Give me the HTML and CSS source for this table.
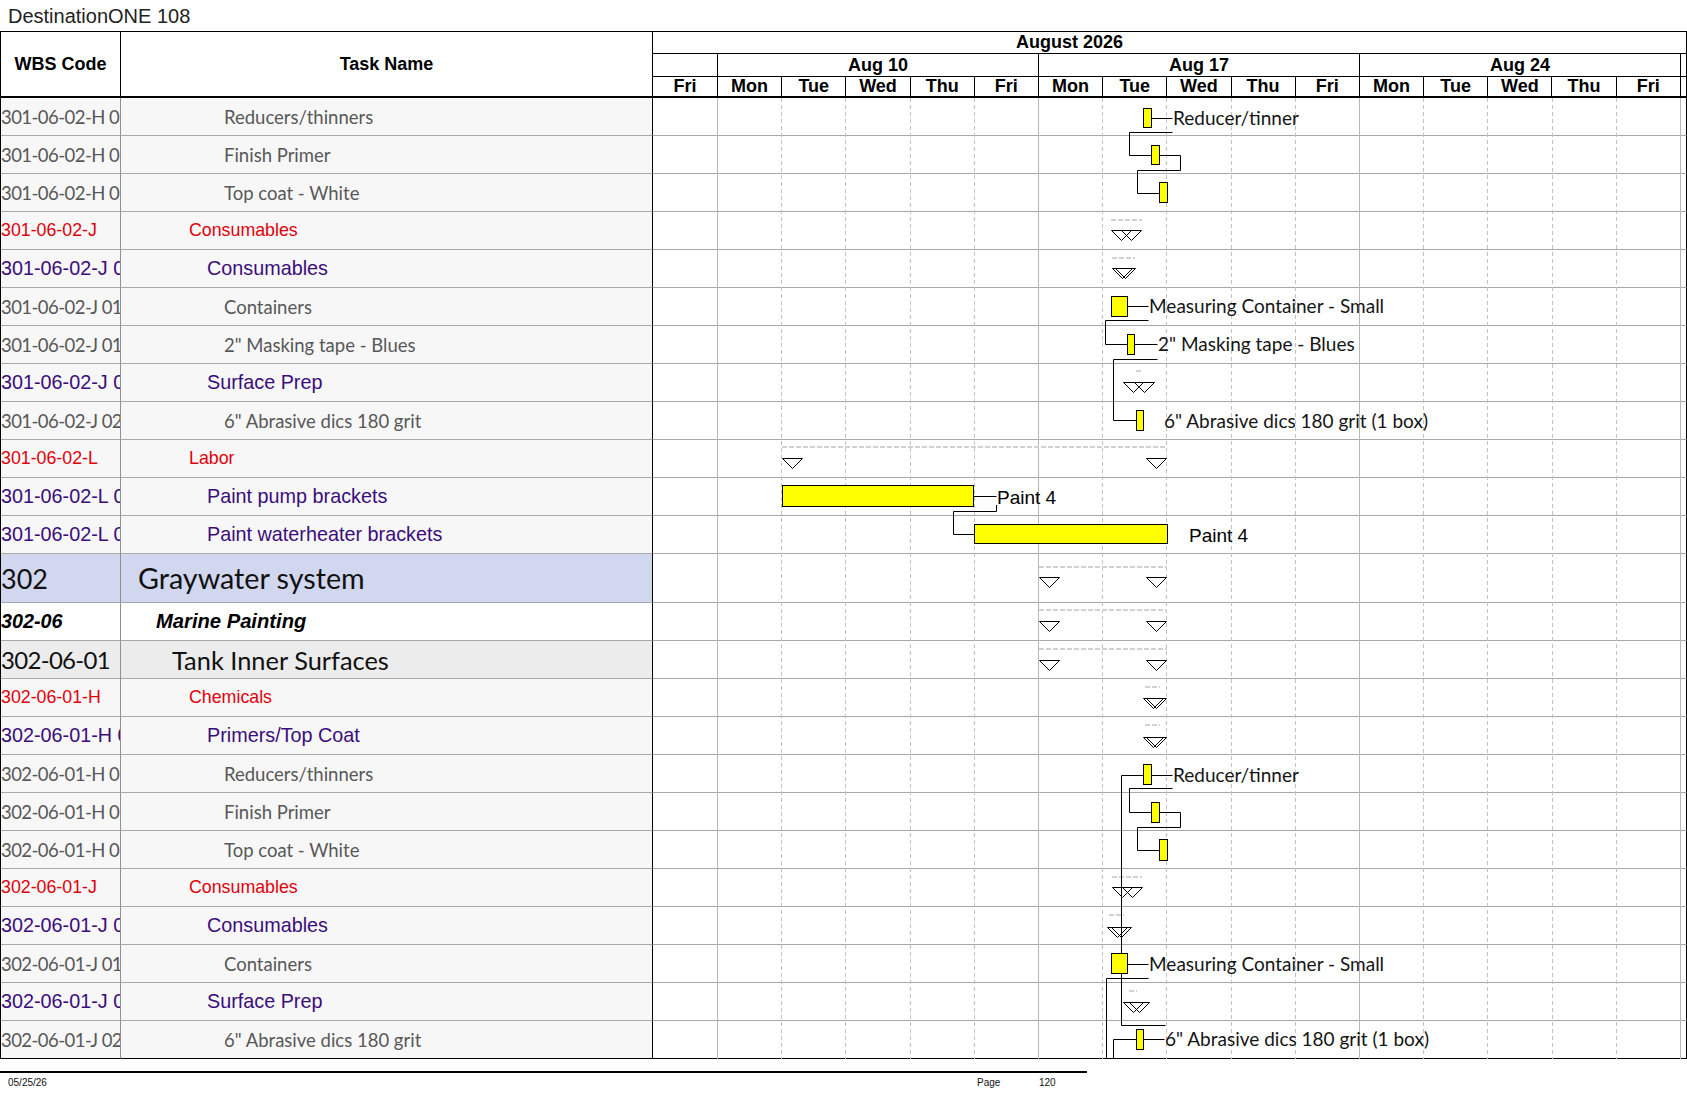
FILE: index.html
```html
<!DOCTYPE html>
<html lang="en">
<head>
<meta charset="utf-8">
<title>DestinationONE 108</title>
<link rel="stylesheet" href="styles.css">
</head>
<body>
<div class="title">DestinationONE 108</div>
<div class="sheet">
  <div class="head">
    <div class="h-wbs">WBS Code</div>
    <div class="h-task">Task Name</div>
    <div class="h-gantt">
      <div class="h-month">August 2026</div>
      <div class="h-weeks">
        <div></div><div>Aug 10</div><div>Aug 17</div><div>Aug 24</div><div class="tail"></div>
      </div>
      <div class="h-days">
        <div>Fri</div><div>Mon</div><div>Tue</div><div>Wed</div><div>Thu</div><div>Fri</div>
        <div>Mon</div><div>Tue</div><div>Wed</div><div>Thu</div><div>Fri</div>
        <div>Mon</div><div>Tue</div><div>Wed</div><div>Thu</div><div>Fri</div><div class="tail"></div>
      </div>
    </div>
  </div>
  <div class="body">
    <div class="row g"><div class="wbs">301-06-02-H 01</div><div class="task">Reducers/thinners</div><div class="gcell"></div></div>
    <div class="row g"><div class="wbs">301-06-02-H 01</div><div class="task">Finish Primer</div><div class="gcell"></div></div>
    <div class="row g"><div class="wbs">301-06-02-H 01</div><div class="task">Top coat - White</div><div class="gcell"></div></div>
    <div class="row r"><div class="wbs">301-06-02-J</div><div class="task">Consumables</div><div class="gcell"></div></div>
    <div class="row p"><div class="wbs">301-06-02-J 01</div><div class="task">Consumables</div><div class="gcell"></div></div>
    <div class="row g"><div class="wbs">301-06-02-J 01</div><div class="task">Containers</div><div class="gcell"></div></div>
    <div class="row g"><div class="wbs">301-06-02-J 01</div><div class="task">2" Masking tape - Blues</div><div class="gcell"></div></div>
    <div class="row p"><div class="wbs">301-06-02-J 02</div><div class="task">Surface Prep</div><div class="gcell"></div></div>
    <div class="row g"><div class="wbs">301-06-02-J 02</div><div class="task">6" Abrasive dics 180 grit</div><div class="gcell"></div></div>
    <div class="row r"><div class="wbs">301-06-02-L</div><div class="task">Labor</div><div class="gcell"></div></div>
    <div class="row p"><div class="wbs">301-06-02-L 01</div><div class="task">Paint pump brackets</div><div class="gcell"></div></div>
    <div class="row p"><div class="wbs">301-06-02-L 02</div><div class="task">Paint waterheater brackets</div><div class="gcell"></div></div>
    <div class="row big"><div class="wbs">302</div><div class="task">Graywater system</div><div class="gcell"></div></div>
    <div class="row marine"><div class="wbs">302-06</div><div class="task">Marine Painting</div><div class="gcell"></div></div>
    <div class="row tank"><div class="wbs">302-06-01</div><div class="task">Tank Inner Surfaces</div><div class="gcell"></div></div>
    <div class="row r"><div class="wbs">302-06-01-H</div><div class="task">Chemicals</div><div class="gcell"></div></div>
    <div class="row p"><div class="wbs">302-06-01-H 01</div><div class="task">Primers/Top Coat</div><div class="gcell"></div></div>
    <div class="row g"><div class="wbs">302-06-01-H 01</div><div class="task">Reducers/thinners</div><div class="gcell"></div></div>
    <div class="row g"><div class="wbs">302-06-01-H 01</div><div class="task">Finish Primer</div><div class="gcell"></div></div>
    <div class="row g"><div class="wbs">302-06-01-H 01</div><div class="task">Top coat - White</div><div class="gcell"></div></div>
    <div class="row r"><div class="wbs">302-06-01-J</div><div class="task">Consumables</div><div class="gcell"></div></div>
    <div class="row p"><div class="wbs">302-06-01-J 01</div><div class="task">Consumables</div><div class="gcell"></div></div>
    <div class="row g"><div class="wbs">302-06-01-J 01</div><div class="task">Containers</div><div class="gcell"></div></div>
    <div class="row p"><div class="wbs">302-06-01-J 02</div><div class="task">Surface Prep</div><div class="gcell"></div></div>
    <div class="row g"><div class="wbs">302-06-01-J 02</div><div class="task">6" Abrasive dics 180 grit</div><div class="gcell"></div></div>

    <svg class="chart" width="1035" height="961" viewBox="0 0 1035 961" xmlns="http://www.w3.org/2000/svg">
      <g class="vsolid">
        <line x1="65.5" y1="0" x2="65.5" y2="961"/>
        <line x1="386.5" y1="0" x2="386.5" y2="961"/>
        <line x1="707.5" y1="0" x2="707.5" y2="961"/>
        <line x1="1028.5" y1="0" x2="1028.5" y2="961"/>
      </g>
      <g class="vdash">
        <line x1="129.5" y1="0" x2="129.5" y2="961"/>
        <line x1="193.5" y1="0" x2="193.5" y2="961"/>
        <line x1="258.5" y1="0" x2="258.5" y2="961"/>
        <line x1="322.5" y1="0" x2="322.5" y2="961"/>
        <line x1="450.5" y1="0" x2="450.5" y2="961"/>
        <line x1="514.5" y1="0" x2="514.5" y2="961"/>
        <line x1="579.5" y1="0" x2="579.5" y2="961"/>
        <line x1="643.5" y1="0" x2="643.5" y2="961"/>
        <line x1="771.5" y1="0" x2="771.5" y2="961"/>
        <line x1="835.5" y1="0" x2="835.5" y2="961"/>
        <line x1="900.5" y1="0" x2="900.5" y2="961"/>
        <line x1="964.5" y1="0" x2="964.5" y2="961"/>
      </g>
      <g class="sdash">
        <line x1="459" y1="122" x2="490" y2="122"/>
        <line x1="460" y1="160" x2="483" y2="160"/>
        <line x1="484" y1="273" x2="491" y2="273"/>
        <line x1="130" y1="349" x2="515" y2="349"/>
        <line x1="387" y1="469" x2="515" y2="469"/>
        <line x1="387" y1="512" x2="515" y2="512"/>
        <line x1="387" y1="551" x2="515" y2="551"/>
        <line x1="493" y1="589" x2="508" y2="589"/>
        <line x1="493" y1="627" x2="508" y2="627"/>
        <line x1="460" y1="779" x2="490" y2="779"/>
        <line x1="457" y1="817" x2="472" y2="817"/>
        <line x1="477" y1="893" x2="485" y2="893"/>
      </g>
      <g class="link">
        <line x1="499.5" y1="20.5" x2="520.5" y2="20.5"/>
        <polyline points="520.5,34.5 477.5,34.5 477.5,57.5 499.5,57.5"/>
        <polyline points="507.5,57.5 528.5,57.5 528.5,72.5 485.5,72.5 485.5,95.5 507.5,95.5"/>
        <line x1="475.5" y1="208.5" x2="496.5" y2="208.5"/>
        <polyline points="496.5,222.5 453.5,222.5 453.5,246.5 475.5,246.5"/>
        <line x1="482.5" y1="246.5" x2="505.5" y2="246.5"/>
        <polyline points="505.5,261.5 461.5,261.5 461.5,322.5 484.5,322.5"/>
        <line x1="321.5" y1="398.5" x2="344.5" y2="398.5"/>
        <polyline points="344.5,407 344.5,413.5 301.5,413.5 301.5,436.5 322.5,436.5"/>
        <polyline points="491.5,677.5 469.5,677.5 469.5,927.5 513.5,927.5"/>
        <line x1="499.5" y1="677.5" x2="520.5" y2="677.5"/>
        <polyline points="520.5,690.5 477.5,690.5 477.5,714.5 499.5,714.5"/>
        <polyline points="507.5,714.5 528.5,714.5 528.5,729.5 485.5,729.5 485.5,752.5 507.5,752.5"/>
        <line x1="475.5" y1="866.5" x2="496.5" y2="866.5"/>
        <polyline points="496.5,880.5 454.5,880.5 454.5,961"/>
        <line x1="491.5" y1="941.5" x2="512.5" y2="941.5"/>
        <polyline points="461.5,961 461.5,941.5 484.5,941.5"/>
      </g>
      <g class="tri">
        <polygon points="459.5,132.5 479.5,132.5 469.5,142.5"/>
        <polygon class="open" points="469.5,132.5 489.5,132.5 479.5,142.5"/>
        <polygon points="460.5,170.5 480.5,170.5 470.5,180.5"/>
        <polygon class="open" points="463.5,170.5 483.5,170.5 473.5,180.5"/>
        <polygon points="471.5,284.5 491.5,284.5 481.5,294.5"/>
        <polygon class="open" points="482.5,284.5 502.5,284.5 492.5,294.5"/>
        <polygon points="130.5,360.5 150.5,360.5 140.5,370.5"/>
        <polygon points="494.5,360.5 514.5,360.5 504.5,370.5"/>
        <polygon points="387.5,479.5 407.5,479.5 397.5,489.5"/>
        <polygon points="494.5,479.5 514.5,479.5 504.5,489.5"/>
        <polygon points="387.5,523.5 407.5,523.5 397.5,533.5"/>
        <polygon points="494.5,523.5 514.5,523.5 504.5,533.5"/>
        <polygon points="387.5,562.5 407.5,562.5 397.5,572.5"/>
        <polygon points="494.5,562.5 514.5,562.5 504.5,572.5"/>
        <polygon points="491.5,600.5 511.5,600.5 501.5,610.5"/>
        <polygon class="open" points="494.5,600.5 514.5,600.5 504.5,610.5"/>
        <polygon points="491.5,639.5 511.5,639.5 501.5,649.5"/>
        <polygon class="open" points="494.5,639.5 514.5,639.5 504.5,649.5"/>
        <polygon class="open" points="460.5,789.5 480.5,789.5 470.5,799.5"/>
        <polygon class="open" points="470.5,789.5 490.5,789.5 480.5,799.5"/>
        <polygon class="open" points="455.5,829.5 475.5,829.5 465.5,839.5"/>
        <polygon class="open" points="459.5,829.5 479.5,829.5 469.5,839.5"/>
        <polygon points="471.5,904.5 491.5,904.5 481.5,914.5"/>
        <polygon class="open" points="477.5,904.5 497.5,904.5 487.5,914.5"/>
      </g>
      <g class="bar">
        <rect x="491.5" y="10.5" width="8" height="19"/>
        <rect x="499.5" y="47.5" width="8" height="19"/>
        <rect x="507.5" y="84.5" width="8" height="20"/>
        <rect x="459.5" y="198.5" width="16" height="20"/>
        <rect x="475.5" y="236.5" width="7" height="20"/>
        <rect x="484.5" y="312.5" width="7" height="20"/>
        <rect x="130.5" y="387.5" width="191" height="21"/>
        <rect x="322.5" y="426.5" width="193" height="19"/>
        <rect x="491.5" y="666.5" width="8" height="20"/>
        <rect x="499.5" y="704.5" width="8" height="20"/>
        <rect x="507.5" y="741.5" width="8" height="21"/>
        <rect x="459.5" y="855.5" width="16" height="20"/>
        <rect x="484.5" y="931.5" width="7" height="20"/>
      </g>
      <g class="lbl">
        <text x="521" y="27">Reducer/tinner</text>
        <text x="497" y="215">Measuring Container - Small</text>
        <text x="506" y="253">2" Masking tape - Blues</text>
        <text x="512" y="330">6" Abrasive dics 180 grit (1 box)</text>
        <text x="521" y="684">Reducer/tinner</text>
        <text x="497" y="873">Measuring Container - Small</text>
        <text x="513" y="948">6" Abrasive dics 180 grit (1 box)</text>
      </g>
      <g class="lbl-a">
        <text x="345" y="406">Paint 4</text>
        <text x="537" y="444">Paint 4</text>
      </g>
    </svg>
  </div>
</div>
<div class="footer">
  <span class="f-date">05/25/26</span>
  <span class="f-page">Page</span>
  <span class="f-num">120</span>
</div>
</body>
</html>
```

FILE: styles.css
```css
html, body {
  margin: 0;
  padding: 0;
  background: #fff;
}

body {
  width: 1687px;
  font-family: "Liberation Sans", Arial, sans-serif;
  color: #000;
}

.title {
  height: 31px;
  box-sizing: border-box;
  padding: 2px 0 0 8px;
  font-size: 20px;
  line-height: 28px;
  color: #222;
}

.sheet {
  border-left: 1px solid #000;
}

/* ---------- header ---------- */
.head {
  display: grid;
  grid-template-columns: 120px 531px 1035px;
  height: 67px;
  box-sizing: border-box;
  border-top: 1px solid #000;
  border-bottom: 2px solid #000;
  font-weight: bold;
  font-size: 18px;
}

.h-wbs,
.h-task {
  display: flex;
  align-items: center;
  justify-content: center;
}

.h-wbs {
  border-right: 1px solid #000;
}

.h-gantt {
  border-left: 1px solid #000;
  border-right: 1px solid #000;
  display: flex;
  flex-direction: column;
}

.h-month {
  height: 22px;
  box-sizing: border-box;
  border-bottom: 1px solid #000;
  padding-right: 200px;
  text-align: center;
  line-height: 21px;
}

.h-weeks,
.h-days {
  display: grid;
  box-sizing: border-box;
}

.h-weeks {
  grid-template-columns: 65px repeat(3, 321px) 1fr;
  height: 23px;
  border-bottom: 1px solid #000;
  line-height: 22px;
}

.h-days {
  grid-template-columns: 65px repeat(15, 64.2px) 1fr;
  height: 19px;
  line-height: 19px;
}

.h-weeks > div,
.h-days > div {
  border-right: 1px solid #000;
  text-align: center;
  overflow: hidden;
}

.h-weeks > .tail,
.h-days > .tail {
  border-right: none;
}

/* ---------- body rows ---------- */
.body {
  position: relative;
}

.row {
  display: grid;
  grid-template-columns: 120px 531px 1035px;
  height: 38px;
}

.row > div {
  box-sizing: border-box;
  border-bottom: 1px solid #a8a8a8;
  display: flex;
  align-items: center;
  white-space: nowrap;
  overflow: hidden;
}

.row:last-of-type > div {
  border-bottom-color: #000;
}

.wbs {
  border-right: 1px solid #8f8f8f;
  background: #f7f7f7;
}

.task {
  background: #f7f7f7;
}

.gcell {
  border-left: 1px solid #000;
  border-right: 1px solid #000;
  background: #fff;
}

/* gray detail rows */
.row.g .wbs,
.row.g .task {
  font-family: Lato, "Liberation Sans", sans-serif;
  font-size: 18.5px;
  color: #585858;
}

.row.g .wbs {
  letter-spacing: -0.55px;
}

.row.g .task {
  padding-left: 103px;
}

/* red category rows */
.row.r .wbs,
.row.r .task {
  font-size: 17.8px;
  color: #e0000b;
}

.row.r .task {
  padding-left: 68px;
}

/* purple sub-category rows */
.row.p .wbs,
.row.p .task {
  font-size: 19.8px;
  color: #3b0d7c;
}

.row.p .task {
  padding-left: 86px;
}

/* level 1 */
.row.big {
  height: 49px;
}

.row.big .wbs,
.row.big .task {
  background: #d1d7ef;
  font-family: Lato, "Liberation Sans", sans-serif;
  font-size: 27px;
  color: #111;
}

.row.big .task {
  padding-left: 17px;
  font-size: 28.7px;
}

/* level 2 */
.row.marine .wbs,
.row.marine .task {
  background: #fff;
  font-weight: bold;
  font-style: italic;
  font-size: 19.8px;
  color: #000;
}

.row.marine .task {
  padding-left: 35px;
  font-size: 20.2px;
}

/* level 3 */
.row.tank .wbs,
.row.tank .task {
  background: #ececec;
  font-family: Lato, "Liberation Sans", sans-serif;
  font-size: 24px;
  color: #111;
}

.row.tank .wbs {
  letter-spacing: -0.7px;
}

.row.tank .task {
  padding-left: 51px;
  font-size: 25.4px;
}

/* ---------- gantt drawing ---------- */
.chart {
  position: absolute;
  left: 651px;
  top: 0;
  overflow: visible;
}

.vsolid line {
  stroke: #b8b8b8;
  stroke-width: 1;
}

.vdash line {
  stroke: #c2c2c2;
  stroke-width: 1;
  stroke-dasharray: 4 3;
}

.sdash line {
  stroke: #d2d2d2;
  stroke-width: 2;
  stroke-dasharray: 5 2;
}

.link line,
.link polyline {
  stroke: #000;
  stroke-width: 1;
  fill: none;
}

.tri polygon {
  fill: #fff;
  stroke: #000;
  stroke-width: 1;
}

.tri polygon.open {
  fill: none;
}

.bar rect {
  fill: #ffff00;
  stroke: #000;
  stroke-width: 1;
}

.lbl text {
  font-family: Lato, "Liberation Sans", sans-serif;
  font-size: 19px;
  fill: #151515;
}

.lbl-a text {
  font-family: "Liberation Sans", Arial, sans-serif;
  font-size: 19px;
  fill: #000;
}

/* ---------- footer ---------- */
.footer {
  width: 1087px;
  margin-top: 12px;
  box-sizing: border-box;
  border-top: 2px solid #000;
  padding: 4px 0 0 8px;
  display: flex;
  font-family: "Liberation Sans Narrow", "Liberation Sans", Arial, sans-serif;
  font-size: 10px;
  line-height: 12px;
  color: #111;
}

.f-date {
  flex: 0 0 969px;
}

.f-page {
  flex: 0 0 62px;
}
```
